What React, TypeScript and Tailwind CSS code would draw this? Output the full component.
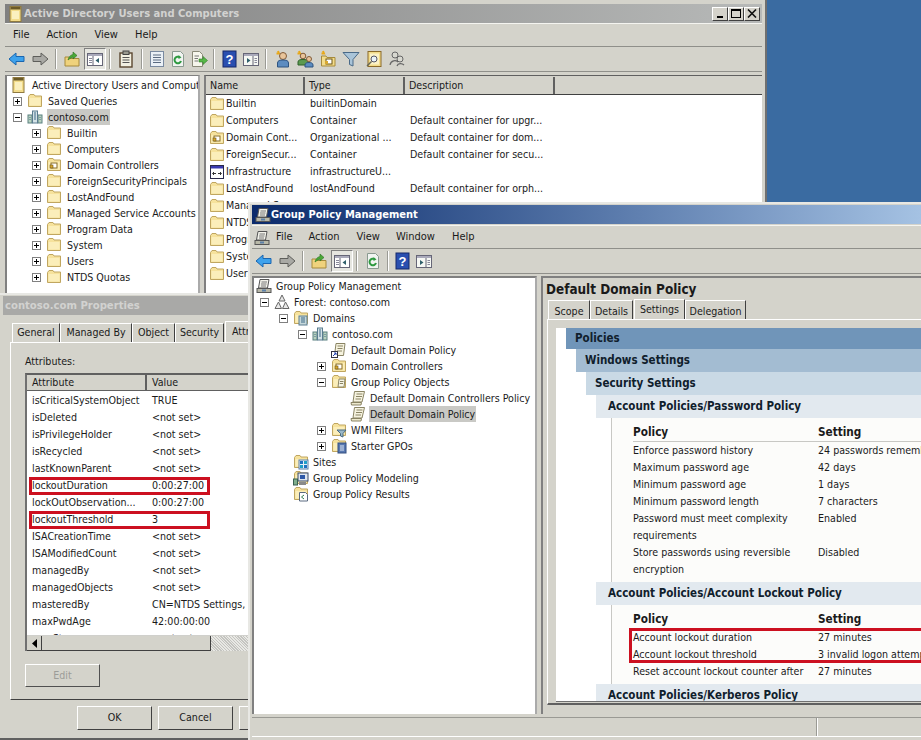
import React from 'react';

type IconName = 'folder' | 'ou' | 'domain' | 'aduc' | 'gpm' | 'forest' | 'domains' | 'link' | 'gpos' | 'gpo' | 'wmi' | 'starter' | 'sites' | 'modeling' | 'results' | 'infra';

const Folder = () => (
  <>
    <path d="M1.5 13.5V3.5L3 1.5H7L8 3H14.5V13.5Z" fill="#f6e29c" stroke="#c0a660" />
    <path d="M2.5 12.5V5H13.5V12.5Z" fill="#fbeeba" />
  </>
);

const TreeIcon = ({ name }: { name: IconName }) => (
  <svg width="16" height="16" viewBox="0 0 16 16" className="shrink-0">
    {(name === 'folder') && <Folder />}
    {name === 'ou' && (
      <>
        <Folder />
        <rect x="5" y="6" width="6" height="5" fill="#fff" stroke="#8a6d20" />
        <rect x="4" y="8" width="3" height="3" fill="#d8a830" stroke="#6d5414" strokeWidth=".6" />
      </>
    )}
    {name === 'domain' && (
      <>
        <rect x="1" y="6" width="4" height="8" fill="#b9d2c0" stroke="#5a8080" />
        <rect x="11" y="6" width="4" height="8" fill="#b9d2c0" stroke="#5a8080" />
        <rect x="5.5" y="2" width="5" height="12" fill="#d3e2e6" stroke="#5a7c90" />
        <path d="M7 4h2M7 6h2M7 8h2M7 10h2M2.5 8.5h1M2.5 10.5h1M12.5 8.5h1M12.5 10.5h1" stroke="#3f6a88" />
      </>
    )}
    {name === 'aduc' && (
      <>
        <rect x="2" y="0.5" width="11" height="15" fill="#f3dc8a" stroke="#8f7a40" />
        <rect x="2.5" y="1" width="10" height="2.5" fill="#6b5a28" />
        <rect x="4" y="5" width="7" height="8" fill="#fbf0bf" />
      </>
    )}
    {name === 'gpm' && (
      <>
        <path d="M4 1.5H13L11.5 10H2.5Z" fill="#f2f2ea" stroke="#555" />
        <path d="M5.5 4H11M5 6H10.5M5 8H10" stroke="#777" />
        <rect x="1" y="10.5" width="14" height="4" fill="#b8b8a8" stroke="#555" />
        <rect x="6" y="11.5" width="4" height="2" fill="#5b7fa8" />
      </>
    )}
    {name === 'forest' && (
      <path d="M8 1L11 7H5ZM4.5 8L7.5 14.5H1ZM11.5 8L15 14.5H8.5Z" fill="#e8e8e8" stroke="#666" />
    )}
    {name === 'domains' && (
      <>
        <Folder />
        <rect x="6" y="6" width="8" height="9" fill="#c5d7da" stroke="#5a7c90" />
        <path d="M8 8h4M8 10h4M8 12h4" stroke="#3f6a88" />
      </>
    )}
    {name === 'link' && (
      <>
        <path d="M5 1.5H14L12.5 13.5H3.5Z" fill="#f6f3df" stroke="#8a8464" />
        <path d="M6.5 4H12M6.5 6.5H11.5M6 9H11" stroke="#8a8464" />
        <rect x="0.5" y="9.5" width="6" height="6" fill="#fff" stroke="#334" />
        <path d="M2 14L5 11M3 11H5V13" stroke="#1f3fb0" fill="none" />
      </>
    )}
    {name === 'gpos' && (
      <>
        <Folder />
        <path d="M8 5H14L13 13H7Z" fill="#f7f5e4" stroke="#8a8464" />
        <path d="M9 7.5H12.5M8.7 9.5H12" stroke="#8a8464" />
      </>
    )}
    {name === 'gpo' && (
      <>
        <path d="M4.5 1.5H14.5L12 12H3Z" fill="#f6f3df" stroke="#8a8464" />
        <path d="M6.5 4H12.5M6 6.5H12M5.5 9H11" stroke="#8a8464" />
        <path d="M1 12.5H11.5L11 15H1.5Z" fill="#ece8cc" stroke="#8a8464" />
      </>
    )}
    {name === 'wmi' && (
      <>
        <Folder />
        <path d="M6 8H15L12 11.5V15L9.5 14V11.5Z" fill="#9ab8c8" stroke="#4a6a80" />
      </>
    )}
    {name === 'starter' && (
      <>
        <Folder />
        <rect x="7" y="5" width="8" height="10" fill="#5878b0" stroke="#334f80" />
        <path d="M9 8H13M9 10H13M9 12H13" stroke="#dfe8f4" />
      </>
    )}
    {name === 'sites' && (
      <>
        <Folder />
        <rect x="6" y="6" width="9" height="9" fill="#e8f0f8" stroke="#5b7fa8" />
        <rect x="7" y="7" width="3" height="3" fill="#2070c0" />
        <rect x="11" y="7" width="3" height="3" fill="#20a0c8" />
        <rect x="7" y="11" width="3" height="3" fill="#20a0c8" />
        <rect x="11" y="11" width="3" height="3" fill="#2070c0" />
      </>
    )}
    {name === 'modeling' && (
      <>
        <Folder />
        <rect x="5" y="3" width="10" height="8" fill="#dfe6ee" stroke="#3a4a68" />
        <rect x="7" y="5" width="5" height="4" fill="#2f59a8" />
        <rect x="0.5" y="9" width="4" height="6" fill="#7fae8c" stroke="#3a6050" />
        <rect x="6" y="12" width="7" height="3" fill="#8a8a8a" />
      </>
    )}
    {name === 'results' && (
      <>
        <Folder />
        <path d="M6.5 6.5H12.5L14.5 8.5V15H6.5Z" fill="#fff" stroke="#5a6a80" />
        <path d="M11 9L8.5 11L11 13" stroke="#2f7a50" fill="none" />
      </>
    )}
    {name === 'infra' && (
      <>
        <rect x="1.5" y="1.5" width="13" height="13" fill="#fff" stroke="#2a2a4a" />
        <rect x="2" y="2" width="12" height="2.5" fill="#3a3ab0" />
        <path d="M4 9.5H7M9 9.5H12M5 8L3.5 9.5L5 11M11 8L12.5 9.5L11 11" stroke="#333" fill="none" />
      </>
    )}
  </svg>
);

type ToolName = 'back' | 'forward' | 'up' | 'tree' | 'clip' | 'list' | 'refresh' | 'export' | 'help' | 'panel' | 'user' | 'group' | 'newou' | 'filter' | 'find' | 'deleg';

const ToolIcon = ({ name }: { name: ToolName }) => (
  <svg width="18" height="18" viewBox="0 0 18 18">
    {name === 'back' && <path d="M1 9L8 3V6.5H16V11.5H8V15Z" fill="#3ea2ec" stroke="#1a66b0" />}
    {name === 'forward' && <path d="M17 9L10 3V6.5H2V11.5H10V15Z" fill="#a9a9a4" stroke="#5e5e5a" />}
    {name === 'up' && (
      <>
        <path d="M2 16V7H6L7 8.5H16V16Z" fill="#efd27c" stroke="#a68a3c" />
        <path d="M5 10C6 6 8 5 10 4.5V2L14 5.5L10 9V7C8.5 7.5 7 8.5 5 10Z" fill="#4aa838" stroke="#2a7020" strokeWidth=".6" />
      </>
    )}
    {name === 'tree' && (
      <>
        <rect x="1.5" y="3.5" width="15" height="12" fill="#fff" stroke="#667" />
        <rect x="2" y="4" width="14" height="2" fill="#aab" />
        <path d="M7 6V15" stroke="#667" />
        <path d="M3 8.5H6M3 10.5H6M3 12.5H6" stroke="#889" />
        <path d="M13 8V13L9.5 10.5Z" fill="#2f5f6a" />
      </>
    )}
    {name === 'clip' && (
      <>
        <rect x="3" y="3" width="12" height="14" fill="#f2f0e2" stroke="#5a4630" strokeWidth="1.4" />
        <rect x="6" y="1" width="6" height="3.5" fill="#9a9a90" stroke="#444" />
        <path d="M5.5 7.5H12.5M5.5 10H12.5M5.5 12.5H12.5" stroke="#555" />
      </>
    )}
    {name === 'list' && (
      <>
        <rect x="2.5" y="1.5" width="13" height="15" fill="#eaf0f6" stroke="#7a8aa0" />
        <path d="M5 5H13M5 7.5H13M5 10H13M5 12.5H13" stroke="#5a6a80" />
      </>
    )}
    {name === 'refresh' && (
      <>
        <path d="M3.5 1.5H11.5L14.5 4.5V16.5H3.5Z" fill="#f1f4f1" stroke="#8a9a90" />
        <path d="M12 11A3.3 3.3 0 1 1 10.8 7.3" fill="none" stroke="#2e9a40" strokeWidth="2" />
        <path d="M9.5 5L12.5 7.5L9.5 9Z" fill="#2e9a40" />
      </>
    )}
    {name === 'export' && (
      <>
        <path d="M2.5 1.5H9.5L12.5 4.5V16.5H2.5Z" fill="#f6f6ec" stroke="#8a8a78" />
        <path d="M4.5 6H9M4.5 8.5H8M4.5 11H8" stroke="#777" />
        <path d="M9 9H13V6.5L17.5 10.5L13 14.5V12H9Z" fill="#58b848" stroke="#2f7a28" strokeWidth=".6" />
      </>
    )}
    {name === 'help' && (
      <>
        <rect x="2" y="1" width="13" height="16" fill="#2a4fb0" stroke="#14286a" />
        <text x="8.5" y="14" fontSize="13" fontWeight="700" textAnchor="middle" fill="#fff" fontFamily="Liberation Sans, sans-serif">?</text>
      </>
    )}
    {name === 'panel' && (
      <>
        <rect x="1.5" y="3.5" width="15" height="12" fill="#f6f8f4" stroke="#667" />
        <rect x="2" y="4" width="14" height="2" fill="#aab" />
        <path d="M11 6V15" stroke="#667" />
        <path d="M12.5 8.5H15M12.5 10.5H15M12.5 12.5H15" stroke="#889" />
        <path d="M5 8V13L8.5 10.5Z" fill="#2f5f6a" />
      </>
    )}
    {name === 'user' && (
      <>
        <path d="M5 1L6 3.5H3.5" fill="none" stroke="#e8a818" strokeWidth="2" />
        <circle cx="10" cy="6" r="3.5" fill="#e8c49a" stroke="#805a38" />
        <path d="M4.5 17V13C4.5 10.5 7 10 10 10S15.5 10.5 15.5 13V17Z" fill="#5c8cc0" stroke="#2f5480" />
      </>
    )}
    {name === 'group' && (
      <>
        <path d="M3 1L4 3.5H1.5" fill="none" stroke="#e8a818" strokeWidth="2" />
        <circle cx="7" cy="6" r="2.8" fill="#e8c49a" stroke="#805a38" />
        <path d="M2 15V12C2 10 4 9.5 7 9.5S12 10 12 12V15Z" fill="#5c9a50" stroke="#2f6028" />
        <circle cx="13" cy="9" r="2.5" fill="#e8c49a" stroke="#805a38" />
        <path d="M9 17V15C9 13 11 12.5 13 12.5S17 13 17 15V17Z" fill="#5c8cc0" stroke="#2f5480" />
      </>
    )}
    {name === 'newou' && (
      <>
        <path d="M4 1L5 3.5H2.5" fill="none" stroke="#e8a818" strokeWidth="2" />
        <path d="M2.5 16V6H7L8 7.5H16V16Z" fill="#f3dc8a" stroke="#a68a3c" />
        <rect x="7" y="9" width="6" height="5" fill="#fff" stroke="#6d5414" />
        <rect x="6" y="11" width="3" height="3" fill="#d8a830" />
      </>
    )}
    {name === 'filter' && <path d="M1 2.5H17L11 9.5V16L7.5 14.5V9.5Z" fill="#a9c4d8" stroke="#4a6a88" />}
    {name === 'find' && (
      <>
        <rect x="3" y="1.5" width="13" height="15" fill="#f3dc8a" stroke="#8a6a2a" />
        <rect x="5" y="3.5" width="9" height="11" fill="#fbf2c8" />
        <circle cx="9" cy="9" r="3" fill="#eaf4fa" stroke="#556" />
        <path d="M6.5 11.5L2 16" stroke="#665" strokeWidth="1.5" />
      </>
    )}
    {name === 'deleg' && (
      <>
        <circle cx="7" cy="5" r="3" fill="#d8d8d0" stroke="#666" />
        <circle cx="12" cy="9" r="3" fill="#d8d8d0" stroke="#666" />
        <path d="M2 15C3 10 8 10 10 12M9 16C10 13 14 13 16 15" fill="none" stroke="#666" strokeWidth="1.2" />
      </>
    )}
  </svg>
);

const Tool = ({ name, className }: { name: ToolName; className: string }) => (
  <span className={`flex h-[22px] shrink-0 items-center justify-center ${className}`}>
    <ToolIcon name={name} />
  </span>
);

const Sep = ({ className }: { className: string }) => (
  <span className={`h-[20px] w-[2px] shrink-0 border-l border-r border-l-[#9a9a94] border-r-white ${className}`} />
);

const Expander = ({ type }: { type?: 'plus' | 'minus' }) => (
  <span className={`relative h-[9px] w-[9px] shrink-0 ${type ? 'border border-[#808080] bg-white' : ''}`}>
    {type && <span className="absolute left-[1px] top-[3px] h-[1px] w-[5px] bg-black" />}
    {type === 'plus' && <span className="absolute left-[3px] top-[1px] h-[5px] w-[1px] bg-black" />}
  </span>
);

type TreeItem = { pad: string; exp?: 'plus' | 'minus'; noExp?: boolean; icon: IconName; text: string; sel?: boolean };

const TreeRow = ({ item, gap }: { item: TreeItem; gap: string }) => (
  <div className={`flex h-4 items-center whitespace-nowrap ${item.pad}`}>
    {!item.noExp && <Expander type={item.exp} />}
    <span className={`${item.noExp ? '' : 'ml-[5px]'} ${gap}`}>
      <TreeIcon name={item.icon} />
    </span>
    <span className={`px-[1px] leading-4 ${item.sel ? 'bg-[#c9c9c5]' : ''}`}>{item.text}</span>
  </div>
);

const WinBtn = ({ children }: { children: React.ReactNode }) => (
  <span className="flex h-[14px] w-[16px] items-center justify-center border border-b-[#404040] border-l-white border-r-[#404040] border-t-white bg-[#d4d2ca]">
    {children}
  </span>
);

const MenuBar = ({ className, children }: { className: string; children: React.ReactNode }) => (
  <div className={`flex h-[24px] items-center border-b border-t border-b-[#8f8f8a] border-t-[#f4f4f0] text-[11px] ${className}`}>{children}</div>
);

const aducTree: TreeItem[] = [
  { pad: 'pl-[4px]', noExp: true, icon: 'aduc', text: 'Active Directory Users and Comput' },
  { pad: 'pl-[6px]', exp: 'plus', icon: 'folder', text: 'Saved Queries' },
  { pad: 'pl-[6px]', exp: 'minus', icon: 'domain', text: 'contoso.com', sel: true },
  { pad: 'pl-[25px]', exp: 'plus', icon: 'folder', text: 'Builtin' },
  { pad: 'pl-[25px]', exp: 'plus', icon: 'folder', text: 'Computers' },
  { pad: 'pl-[25px]', exp: 'plus', icon: 'ou', text: 'Domain Controllers' },
  { pad: 'pl-[25px]', exp: 'plus', icon: 'folder', text: 'ForeignSecurityPrincipals' },
  { pad: 'pl-[25px]', exp: 'plus', icon: 'folder', text: 'LostAndFound' },
  { pad: 'pl-[25px]', exp: 'plus', icon: 'folder', text: 'Managed Service Accounts' },
  { pad: 'pl-[25px]', exp: 'plus', icon: 'folder', text: 'Program Data' },
  { pad: 'pl-[25px]', exp: 'plus', icon: 'folder', text: 'System' },
  { pad: 'pl-[25px]', exp: 'plus', icon: 'folder', text: 'Users' },
  { pad: 'pl-[25px]', exp: 'plus', icon: 'folder', text: 'NTDS Quotas' },
];

const aducList: { icon: IconName; name: string; type: string; desc: string }[] = [
  { icon: 'folder', name: 'Builtin', type: 'builtinDomain', desc: '' },
  { icon: 'folder', name: 'Computers', type: 'Container', desc: 'Default container for upgr...' },
  { icon: 'ou', name: 'Domain Cont...', type: 'Organizational ...', desc: 'Default container for dom...' },
  { icon: 'folder', name: 'ForeignSecur...', type: 'Container', desc: 'Default container for secu...' },
  { icon: 'infra', name: 'Infrastructure', type: 'infrastructureU...', desc: '' },
  { icon: 'folder', name: 'LostAndFound', type: 'lostAndFound', desc: 'Default container for orph...' },
  { icon: 'folder', name: 'Managed Se...', type: '', desc: '' },
  { icon: 'folder', name: 'NTDS Quotas', type: '', desc: '' },
  { icon: 'folder', name: 'Program Data', type: '', desc: '' },
  { icon: 'folder', name: 'System', type: '', desc: '' },
  { icon: 'folder', name: 'Users', type: '', desc: '' },
];

const attrs: [string, string, boolean?][] = [
  ['isCriticalSystemObject', 'TRUE'],
  ['isDeleted', '<not set>'],
  ['isPrivilegeHolder', '<not set>'],
  ['isRecycled', '<not set>'],
  ['lastKnownParent', '<not set>'],
  ['lockoutDuration', '0:00:27:00', true],
  ['lockOutObservation...', '0:00:27:00'],
  ['lockoutThreshold', '3', true],
  ['ISACreationTime', '<not set>'],
  ['ISAModifiedCount', '<not set>'],
  ['managedBy', '<not set>'],
  ['managedObjects', '<not set>'],
  ['masteredBy', 'CN=NTDS Settings,'],
  ['maxPwdAge', '42:00:00:00'],
  ['maxStorage', '<not set>'],
];

const gpmTree: TreeItem[] = [
  { pad: 'pl-[2px]', noExp: true, icon: 'gpm', text: 'Group Policy Management' },
  { pad: 'pl-[6px]', exp: 'minus', icon: 'forest', text: 'Forest: contoso.com' },
  { pad: 'pl-[25px]', exp: 'minus', icon: 'domains', text: 'Domains' },
  { pad: 'pl-[44px]', exp: 'minus', icon: 'domain', text: 'contoso.com' },
  { pad: 'pl-[77px]', noExp: true, icon: 'link', text: 'Default Domain Policy' },
  { pad: 'pl-[63px]', exp: 'plus', icon: 'ou', text: 'Domain Controllers' },
  { pad: 'pl-[63px]', exp: 'minus', icon: 'gpos', text: 'Group Policy Objects' },
  { pad: 'pl-[96px]', noExp: true, icon: 'gpo', text: 'Default Domain Controllers Policy' },
  { pad: 'pl-[96px]', noExp: true, icon: 'gpo', text: 'Default Domain Policy', sel: true },
  { pad: 'pl-[63px]', exp: 'plus', icon: 'wmi', text: 'WMI Filters' },
  { pad: 'pl-[63px]', exp: 'plus', icon: 'starter', text: 'Starter GPOs' },
  { pad: 'pl-[39px]', noExp: true, icon: 'sites', text: 'Sites' },
  { pad: 'pl-[39px]', noExp: true, icon: 'modeling', text: 'Group Policy Modeling' },
  { pad: 'pl-[39px]', noExp: true, icon: 'results', text: 'Group Policy Results' },
];

const ReportBar = ({ className, children }: { className: string; children: React.ReactNode }) => (
  <div className={`flex items-center whitespace-nowrap pt-[1px] text-[11.5px] font-bold text-[#10202c] ${className}`}>{children}</div>
);

const PolicyRow = ({ policy, setting, h = 'h-[17px]' }: { policy: React.ReactNode; setting: string; h?: string }) => (
  <div className={`flex whitespace-nowrap leading-[17px] ${h}`}>
    <div className="w-[185px] shrink-0">{policy}</div>
    <div>{setting}</div>
  </div>
);

const PolicyHead = () => (
  <div className="flex h-[18px] items-center whitespace-nowrap border-b border-[#c8c8c4] pt-[1px] text-[11.7px] font-bold">
    <div className="w-[185px] shrink-0">Policy</div>
    <div>Setting</div>
  </div>
);

const PropButton = ({ children }: { children: React.ReactNode }) => (
  <span className="flex h-[24px] w-[75px] shrink-0 items-center justify-center border border-b-[#404040] border-l-white border-r-[#404040] border-t-white">
    {children}
  </span>
);

const Tab = ({ className, children }: { className: string; children: React.ReactNode }) => (
  <span className={`flex h-[19px] items-center justify-center whitespace-nowrap border-l border-r border-t border-l-white border-r-[#404040] border-t-white ${className}`}>
    {children}
  </span>
);

export default function App() {
  return (
    <div className="relative h-[740px] w-[921px] overflow-hidden bg-[#3a6ba1] text-[10.6px] text-[#1a1a1a] [font-family:DejaVu_Sans_Condensed,sans-serif]">
      {/* Active Directory Users and Computers */}
      <div className="absolute left-0 top-0 h-[296px] w-[767px] overflow-hidden border-r-2 border-r-[#6f6f6f] bg-[#d4d3cb] pl-[5px] pr-[3px] pt-[4px]">
        <div className="flex h-[19px] items-center bg-gradient-to-r from-[#808080] to-[#b7b9b8] pl-[3px] pr-[2px]">
          <TreeIcon name="aduc" />
          <span className="pt-[1px] text-[11.1px] font-bold text-[#d2d2d0]">Active Directory Users and Computers</span>
          <span className="ml-auto flex">
            <WinBtn><span className="mt-[6px] h-[2px] w-[6px] bg-black" /></WinBtn>
            <WinBtn><span className="h-[9px] w-[10px] border border-t-2 border-black" /></WinBtn>
            <WinBtn>
              <svg width="10" height="9" viewBox="0 0 10 9"><path d="M1 0.5L9 8.5M9 0.5L1 8.5" stroke="#111" strokeWidth="1.6" /></svg>
            </WinBtn>
          </span>
        </div>
        <MenuBar className="pt-[1px]">
          <span className="ml-[8px]">File</span>
          <span className="ml-[17px]">Action</span>
          <span className="ml-[17px]">View</span>
          <span className="ml-[17px]">Help</span>
        </MenuBar>
        <div className="flex h-[25px] items-center border-b border-[#8f8f8a]">
          <Tool name="back" className="ml-[3px] w-[18px]" />
          <Tool name="forward" className="ml-[5px] w-[18px]" />
          <Sep className="ml-[6px]" />
          <Tool name="up" className="ml-[6px] w-[18px]" />
          <span className="ml-[3px] flex h-[22px] w-[22px] items-center justify-center border border-b-white border-l-[#808080] border-r-white border-t-[#808080] bg-[#e6e6e0]">
            <ToolIcon name="tree" />
          </span>
          <Sep className="ml-[3px]" />
          <Tool name="clip" className="ml-[6px] w-[18px]" />
          <Sep className="ml-[6px]" />
          <Tool name="list" className="ml-[5px] w-[18px]" />
          <Tool name="refresh" className="ml-[3px] w-[18px]" />
          <Tool name="export" className="ml-[3px] w-[18px]" />
          <Sep className="ml-[5px]" />
          <Tool name="help" className="ml-[6px] w-[18px]" />
          <Tool name="panel" className="ml-[3px] w-[18px]" />
          <Sep className="ml-[5px]" />
          <Tool name="user" className="ml-[6px] w-[18px]" />
          <Tool name="group" className="ml-[5px] w-[18px]" />
          <Tool name="newou" className="ml-[5px] w-[18px]" />
          <Tool name="filter" className="ml-[5px] w-[18px]" />
          <Tool name="find" className="ml-[5px] w-[18px]" />
          <Tool name="deleg" className="ml-[5px] w-[18px]" />
        </div>
        <div className="mt-[3px] flex h-[222px] gap-[4px]">
          <div className="w-[195px] shrink-0 overflow-hidden border-l-2 border-r-2 border-t border-l-[#808080] border-r-[#aaa] border-t-[#808080] bg-white pt-[1px]">
            {aducTree.map((item) => (
              <TreeRow key={item.text} item={item} gap="mr-[4px]" />
            ))}
          </div>
          <div className="min-w-0 flex-1 overflow-hidden border-l-2 border-t border-l-[#808080] border-t-[#606060] bg-white">
            <div className="flex h-[19px] items-center border-b border-[#404040] bg-[#d4d3cb] pt-[1px]">
              <span className="w-[99px] shrink-0 border-r-2 border-[#606060] pl-[4px] leading-[17px]">Name</span>
              <span className="w-[100px] shrink-0 border-r-2 border-[#606060] pl-[4px] leading-[17px]">Type</span>
              <span className="w-[150px] shrink-0 border-r-2 border-[#606060] pl-[4px] leading-[17px]">Description</span>
            </div>
            <div>
              {aducList.map((row) => (
                <div key={row.name} className="flex h-[17px] items-center whitespace-nowrap">
                  <span className="flex w-[99px] shrink-0 items-center pl-[3px]">
                    <TreeIcon name={row.icon} />
                    <span className="ml-[1px]">{row.name}</span>
                  </span>
                  <span className="w-[100px] shrink-0 pl-[5px]">{row.type}</span>
                  <span className="pl-[5px]">{row.desc}</span>
                </div>
              ))}
            </div>
          </div>
        </div>
      </div>

      {/* contoso.com Properties */}
      <div className="absolute left-0 top-[293px] h-[447px] w-[248px] overflow-hidden border-b-2 border-t-2 border-b-[#606060] border-t-[#e8e8e4] bg-[#d4d3cb] pl-[3px] pt-[1px]">
        <div className="flex h-[19px] items-center bg-[#a9a9a7] pl-[2px] pt-[1px] text-[11.2px] font-bold text-[#d2d2d0]">contoso.com Properties</div>
        <div className="mt-[6px] flex w-[400px] items-end pl-[9px]">
          <Tab className="w-[48px]">General</Tab>
          <Tab className="w-[72px]">Managed By</Tab>
          <Tab className="w-[43px]">Object</Tab>
          <Tab className="w-[49px]">Security</Tab>
          <Tab className="ml-[1px] !h-[21px] w-[60px] !justify-start pl-[6px]">Attribute Editor</Tab>
        </div>
        <div className="ml-[7px] h-[358px] w-[400px] border-b border-l border-t border-b-[#404040] border-l-white border-t-white pl-[14px]">
          <div className="pt-[11px] leading-[14px]">Attributes:</div>
          <div className="mt-[5px] h-[278px] w-[300px] overflow-hidden border-l-2 border-t-2 border-l-[#707070] border-t-[#606060] bg-white">
            <div className="flex h-[16px] items-center border-b border-[#606060] bg-[#d4d3cb]">
              <span className="w-[120px] shrink-0 border-r-2 border-[#606060] pl-[5px] leading-[15px]">Attribute</span>
              <span className="pl-[5px]">Value</span>
            </div>
            <div className="relative h-[244px] overflow-hidden pt-[1px]">
              {attrs.map(([name, value, boxed]) => (
                <div key={name} className="relative flex h-[17px] items-center whitespace-nowrap">
                  <span className="w-[120px] shrink-0 pl-[5px]">{name}</span>
                  <span className="pl-[5px]">{value}</span>
                  {boxed && <span className="absolute left-[2px] top-0 h-[18px] w-[181px] border-[3px] border-[#cc1020]" />}
                </div>
              ))}
            </div>
            <div className="flex h-[16px] border-t border-[#d0d0cc] bg-[repeating-linear-gradient(45deg,#e8e8e4_0,#e8e8e4_1px,#c4c4c0_1px,#c4c4c0_2px)]">
              <span className="flex w-[15px] items-center justify-center border-b border-r border-b-[#404040] border-r-[#404040] bg-[#d4d3cb]">
                <svg width="5" height="9" viewBox="0 0 5 9"><path d="M5 0V9L0 4.5Z" fill="#000" /></svg>
              </span>
              <span className="w-[169px] border-b border-r border-b-[#404040] border-r-[#404040] bg-[#d4d3cb]" />
            </div>
          </div>
          <div className="mt-[13px]">
            <span className="flex h-[23px] w-[75px] items-center justify-center border border-b-[#505050] border-l-white border-r-[#505050] border-t-white text-[#9c9c98]">Edit</span>
          </div>
        </div>
        <div className="mt-[6px] flex gap-[6px] pl-[74px]">
          <PropButton>OK</PropButton>
          <PropButton>Cancel</PropButton>
          <PropButton>Apply</PropButton>
        </div>
      </div>

      {/* Group Policy Management */}
      <div className="absolute left-[248px] top-[202px] h-[538px] w-[673px] overflow-hidden border-l-2 border-t-2 border-l-[#e8e8e4] border-t-[#e8e8e4] bg-[#d4d3cb] pl-[2px] pt-[1px]">
        <div className="flex h-[19px] items-center bg-gradient-to-r from-[#0b2a6b] to-[#a5c2e3] pl-[3px] text-[11px] font-bold text-white">
          <TreeIcon name="gpm" />
          <span className="pt-[1px]">Group Policy Management</span>
        </div>
        <MenuBar className="mt-[1px] pt-[1px]">
          <span className="ml-[2px]"><TreeIcon name="gpm" /></span>
          <span className="ml-[6px]">File</span>
          <span className="ml-[16px]">Action</span>
          <span className="ml-[17px]">View</span>
          <span className="ml-[16px]">Window</span>
          <span className="ml-[17px]">Help</span>
        </MenuBar>
        <div className="flex h-[25px] items-center border-b border-[#8f8f8a]">
          <Tool name="back" className="ml-[3px] w-[18px]" />
          <Tool name="forward" className="ml-[5px] w-[18px]" />
          <Sep className="ml-[6px]" />
          <Tool name="up" className="ml-[6px] w-[18px]" />
          <span className="ml-[3px] flex h-[22px] w-[22px] items-center justify-center border border-b-white border-l-[#808080] border-r-white border-t-[#808080] bg-[#e6e6e0]">
            <ToolIcon name="tree" />
          </span>
          <Sep className="ml-[3px]" />
          <Tool name="refresh" className="ml-[6px] w-[18px]" />
          <Sep className="ml-[5px]" />
          <Tool name="help" className="ml-[5px] w-[18px]" />
          <Tool name="panel" className="ml-[3px] w-[18px]" />
        </div>
        <div className="mt-[2px] flex h-[438px] gap-[4px]">
          <div className="w-[285px] shrink-0 border-l-2 border-r-2 border-t-2 border-l-[#808080] border-r-[#aaa] border-t-[#808080] bg-white">
            {gpmTree.map((item) => (
              <TreeRow key={item.text + item.pad} item={item} gap="mr-[3px]" />
            ))}
          </div>
          <div className="min-w-0 flex-1 overflow-hidden border-l-2 border-t-2 border-l-[#808080] border-t-[#808080]">
            <div className="h-[21px] whitespace-nowrap pl-[3px] pt-[2px] text-[13.4px] font-bold leading-[20px]">Default Domain Policy</div>
            <div className="flex items-end pl-[5px]">
              <Tab className="w-[42px] pt-[4px]">Scope</Tab>
              <Tab className="w-[43px] pt-[4px]">Details</Tab>
              <Tab className="ml-[1px] !h-[20px] w-[51px] !border-b-0 bg-[#d4d3cb]">Settings</Tab>
              <Tab className="w-[61px] pt-[4px]">Delegation</Tab>
            </div>
            <div className="ml-[4px] h-[386px] w-[400px] border-b-2 border-l border-t border-b-[#606060] border-l-white border-t-white pl-[8px] pt-[8px]">
              <div className="h-[374px] overflow-hidden border-b border-[#707070] bg-white pl-[10px]">
                <ReportBar className="h-[21px] bg-[#7095b9] pl-[9px]">Policies</ReportBar>
                <ReportBar className="ml-[10px] h-[23px] bg-[#a3bcd2] pl-[9px]">Windows Settings</ReportBar>
                <ReportBar className="ml-[20px] h-[23px] bg-[#c9d9e5] pl-[9px]">Security Settings</ReportBar>
                <ReportBar className="ml-[30px] h-[23px] bg-[#e2e9ef] pl-[12px]">Account Policies/Password Policy</ReportBar>
                <div className="ml-[45px] h-[164px] border-l border-[#c8c8c4] bg-[#fcfcfa] pl-[21px] pt-[6px]">
                  <PolicyHead />
                  <PolicyRow policy="Enforce password history" setting="24 passwords remembered" />
                  <PolicyRow policy="Maximum password age" setting="42 days" />
                  <PolicyRow policy="Minimum password age" setting="1 days" />
                  <PolicyRow policy="Minimum password length" setting="7 characters" />
                  <PolicyRow h="h-[34px]" policy={<>Password must meet complexity<br />requirements</>} setting="Enabled" />
                  <PolicyRow h="h-[34px]" policy={<>Store passwords using reversible<br />encryption</>} setting="Disabled" />
                </div>
                <ReportBar className="ml-[30px] h-[23px] bg-[#e2e9ef] pl-[12px]">Account Policies/Account Lockout Policy</ReportBar>
                <div className="ml-[45px] h-[79px] border-l border-[#c8c8c4] bg-[#fcfcfa] pl-[21px] pt-[6px]">
                  <PolicyHead />
                  <div className="relative">
                    <PolicyRow policy="Account lockout duration" setting="27 minutes" />
                    <PolicyRow policy="Account lockout threshold" setting="3 invalid logon attempts" />
                    <span className="absolute -left-[4px] -top-[1px] h-[35px] w-[330px] border-[3px] border-[#cc1020]" />
                  </div>
                  <PolicyRow policy="Reset account lockout counter after" setting="27 minutes" />
                </div>
                <ReportBar className="ml-[30px] h-[23px] bg-[#e2e9ef] pl-[12px]">Account Policies/Kerberos Policy</ReportBar>
              </div>
            </div>
          </div>
        </div>
        <div className="mt-[3px] flex h-[20px] border-b border-t border-b-white border-t-[#9a9a94]">
          <span className="w-[565px] shrink-0 border-r border-[#9a9a94]" />
          <span className="flex-1 border-l border-white" />
        </div>
      </div>
    </div>
  );
}
